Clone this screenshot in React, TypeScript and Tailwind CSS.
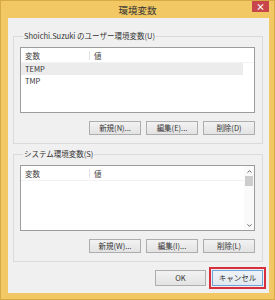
import React from "react";
import { ChevronUp, ChevronDown } from "lucide-react";

const font = "font-['Noto_Sans_CJK_JP',sans-serif]";

const Btn = ({ label, className = "" }: { label: string; className?: string }) => (
  <button
    type="button"
    className={`h-[14px] w-[52px] border border-[#adadad] bg-gradient-to-b from-[#f2f2f2] to-[#e3e3e3] text-[7.5px] leading-none text-[#333] ${className}`}
  >
    {label}
  </button>
);

const EnvList = ({ rows, scroll = false }: { rows: string[]; scroll?: boolean }) => (
  <div className="flex h-[66px] border border-[#9c9c9c] bg-white">
    <div className="flex flex-1 flex-col">
      <div className="flex h-[15px] items-center border-b border-[#f2f2f2] text-[7.5px] text-[#444]">
        <div className="w-[69px] border-r border-[#e2e2e2] pl-[4px] leading-[9px]">変数</div>
        <div className="pl-[4px] leading-[9px]">値</div>
      </div>
      {rows.map((r, i) => (
        <div
          key={r}
          className={`flex h-[12px] w-[222px] items-center pl-[4px] text-[7.5px] text-[#333] ${i === 0 ? "bg-[#ececec]" : ""}`}
        >
          {r}
        </div>
      ))}
    </div>
    {scroll && (
      <div className="flex w-[10px] flex-col bg-[#fafafa]">
        <div className="flex h-[10px] items-center justify-center">
          <ChevronUp className="h-[7px] w-[7px] text-[#555]" strokeWidth={3} />
        </div>
        <div className="mx-auto h-[10px] w-[8px] bg-[#cdcdcd]" />
        <div className="flex-1" />
        <div className="flex h-[10px] items-center justify-center">
          <ChevronDown className="h-[7px] w-[7px] text-[#555]" strokeWidth={3} />
        </div>
      </div>
    )}
  </div>
);

const Group = ({
  title,
  rows,
  buttons,
  scroll,
  className = "",
}: {
  title: string;
  rows: string[];
  buttons: string[];
  scroll?: boolean;
  className?: string;
}) => (
  <fieldset className={`border border-[#dadada] pl-[6px] pr-[7px] pb-[8px] ${className}`}>
    <legend className="ml-[3px] px-[1px] text-[7.5px] leading-[12px] text-[#333]">{title}</legend>
    <div className="mt-[5px]">
      <EnvList rows={rows} scroll={scroll} />
    </div>
    <div className="mt-[8px] flex justify-end gap-[5px]">
      {buttons.map((b) => (
        <Btn key={b} label={b} />
      ))}
    </div>
  </fieldset>
);

export default function App() {
  return (
    <div className={`flex h-[300px] w-[275px] flex-col border border-[#d8aa45] bg-[#f1c863] ${font}`}>
      <div className="flex h-[17px] items-start">
        <div className="w-[22px]" />
        <div className="flex-1 pt-[3px] text-center text-[9.5px] leading-[12px] text-[#333]">環境変数</div>
        <div className="mr-[5px] flex h-[11px] w-[17px] items-center justify-center bg-[#c8464b] text-[9px] font-bold leading-none text-white">
          ×
        </div>
      </div>
      <div className="mb-[6px] ml-[7px] mr-[5px] flex flex-1 flex-col bg-[#f0f0f0] pl-[5px] pr-[6px] pt-[12px]">
        <Group
          title="Shoichi.Suzuki のユーザー環境変数(U)"
          rows={["TEMP", "TMP"]}
          buttons={["新規(N)...", "編集(E)...", "削除(D)"]}
        />
        <Group
          className="mt-[4px]"
          title="システム環境変数(S)"
          rows={[]}
          scroll
          buttons={["新規(W)...", "編集(I)...", "削除(L)"]}
        />
        <div className="mt-[8px] flex justify-end gap-[6px]">
          <button
            type="button"
            className="h-[16px] w-[51px] border border-[#adadad] bg-gradient-to-b from-[#f2f2f2] to-[#e3e3e3] text-[7.5px] leading-none text-[#333]"
          >
            OK
          </button>
          <button
            type="button"
            className="h-[16px] w-[51px] border border-[#6fa3d8] bg-gradient-to-b from-[#eef3f8] to-[#e1e8ef] text-[7.5px] leading-none text-[#333] outline-2 outline-offset-[1px] outline-[#d62f3d]"
          >
            キャンセル
          </button>
        </div>
      </div>
    </div>
  );
}
